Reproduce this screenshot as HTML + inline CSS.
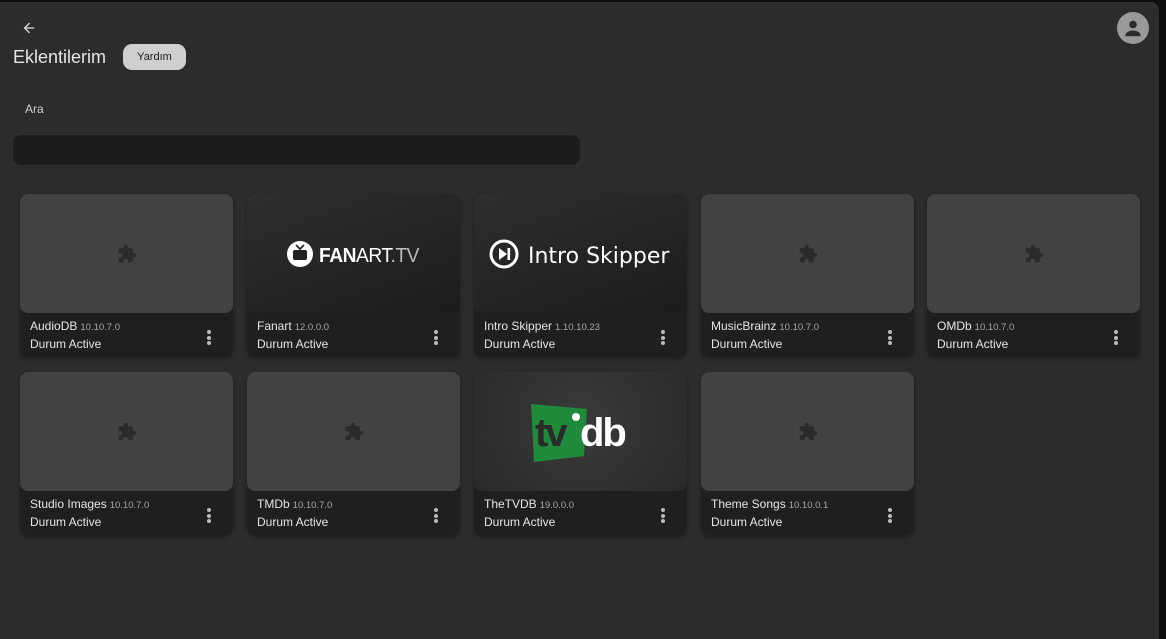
<!DOCTYPE html>
<html><head><meta charset="utf-8"><style>
*{box-sizing:border-box;margin:0;padding:0}
body{width:1166px;height:639px;background:#0e0e0e;font-family:"Liberation Sans",sans-serif;overflow:hidden;position:relative}
.panel{position:absolute;left:0;top:2px;width:1159px;height:637px;background:#2c2c2c;border-top-right-radius:8px}
.abs{position:absolute}
.title{left:13px;top:47px;color:#e6e6e6;font-size:18px}
.help{left:123px;top:44px;width:63px;height:26px;border-radius:9px;background:#cfcfcf;color:#1a1a1a;font-size:11px;text-align:center;line-height:26px}
.ara{left:25px;top:102px;color:#cfcfcf;font-size:12px}
.search{left:13px;top:135px;width:567px;height:30px;border-radius:8px;background:#1d1d1d}
.card{position:absolute;width:213px;height:163px;border-radius:8px;background:#1f1f1f;overflow:hidden;box-shadow:0 2px 4px rgba(0,0,0,.3)}
.img{height:119px;background:#424242;border-radius:8px;display:flex;align-items:center;justify-content:center}
.img.dark{background:linear-gradient(160deg,#2e2e2e,#1c1c1c)}
.img.tv{background:radial-gradient(circle at 50% 40%,#3a3a3a,#2a2a2a)}
.name{position:absolute;left:10px;top:125px;color:#e6e6e6;font-size:12px}
.name small{font-size:9.5px;color:#a8a8a8;margin-left:3px}
.st{position:absolute;left:10px;top:143px;color:#e6e6e6;font-size:12px}
.dots{position:absolute;right:22px;top:136px;width:4px}
.dots i{display:block;width:4px;height:4px;border-radius:2px;background:#bbb;margin-bottom:1.5px}
</style></head><body>
<div class="panel"></div>
<svg class="abs" style="left:21px;top:20px" width="16" height="16" viewBox="0 0 24 24"><path d="M20 11H7.8l5.6-5.6L12 4l-8 8 8 8 1.4-1.4L7.8 13H20z" fill="#ddd"/></svg>
<div class="abs title">Eklentilerim</div>
<div class="abs help">Yardım</div>
<svg class="abs" style="left:1117px;top:12px" width="32" height="32" viewBox="0 0 32 32"><circle cx="16" cy="16" r="16" fill="#9a9a9a"/><circle cx="16" cy="12.5" r="3.8" fill="#2c2c2c"/><path d="M8.5 23c0-3 5-4.5 7.5-4.5s7.5 1.5 7.5 4.5v1.2h-15z" fill="#2c2c2c"/></svg>
<div class="abs ara">Ara</div>
<div class="abs search"></div>

<div class="card" style="left:20px;top:194px"><div class="img"><svg width="20" height="20" viewBox="0 0 24 24"><path d="M20.5 11H19V7a2 2 0 0 0-2-2h-4V3.5a2.5 2.5 0 0 0-5 0V5H4a2 2 0 0 0-2 2v3.8h1.5a2.7 2.7 0 0 1 0 5.4H2V20a2 2 0 0 0 2 2h3.8v-1.5a2.7 2.7 0 0 1 5.4 0V22H17a2 2 0 0 0 2-2v-4h1.5a2.5 2.5 0 0 0 0-5z" fill="#2b2b2b"/></svg></div><div class="name">AudioDB<small>10.10.7.0</small></div><div class="st">Durum Active</div><div class="dots"><i></i><i></i><i></i></div></div>

<div class="card" style="left:247px;top:194px"><div class="img dark"><svg width="136" height="30" viewBox="0 0 136 30"><circle cx="14" cy="15" r="13" fill="#fff"/><rect x="7" y="11" width="14" height="10" rx="2" fill="#222"/><path d="M10 6l4 4 4-4" stroke="#222" stroke-width="1.8" fill="none"/><text x="33" y="23" font-family="Liberation Sans" font-size="20" letter-spacing="-0.5" textLength="100" lengthAdjust="spacingAndGlyphs" fill="#fff"><tspan font-weight="bold">FAN</tspan><tspan>ART</tspan><tspan fill="#bbb">.TV</tspan></text></svg></div><div class="name">Fanart<small>12.0.0.0</small></div><div class="st">Durum Active</div><div class="dots"><i></i><i></i><i></i></div></div>

<div class="card" style="left:474px;top:194px"><div class="img dark"><svg width="186" height="34" viewBox="0 0 186 34"><circle cx="16" cy="17" r="13" stroke="#fff" stroke-width="3" fill="none"/><path d="M11 11l8 6-8 6z" fill="#fff"/><rect x="19.5" y="11" width="2.6" height="12" fill="#fff"/><text x="40" y="26" font-family="DejaVu Sans" font-size="22" fill="#fff">Intro Skipper</text></svg></div><div class="name">Intro Skipper<small>1.10.10.23</small></div><div class="st">Durum Active</div><div class="dots"><i></i><i></i><i></i></div></div>

<div class="card" style="left:701px;top:194px"><div class="img"><svg width="20" height="20" viewBox="0 0 24 24"><path d="M20.5 11H19V7a2 2 0 0 0-2-2h-4V3.5a2.5 2.5 0 0 0-5 0V5H4a2 2 0 0 0-2 2v3.8h1.5a2.7 2.7 0 0 1 0 5.4H2V20a2 2 0 0 0 2 2h3.8v-1.5a2.7 2.7 0 0 1 5.4 0V22H17a2 2 0 0 0 2-2v-4h1.5a2.5 2.5 0 0 0 0-5z" fill="#2b2b2b"/></svg></div><div class="name">MusicBrainz<small>10.10.7.0</small></div><div class="st">Durum Active</div><div class="dots"><i></i><i></i><i></i></div></div>

<div class="card" style="left:927px;top:194px"><div class="img"><svg width="20" height="20" viewBox="0 0 24 24"><path d="M20.5 11H19V7a2 2 0 0 0-2-2h-4V3.5a2.5 2.5 0 0 0-5 0V5H4a2 2 0 0 0-2 2v3.8h1.5a2.7 2.7 0 0 1 0 5.4H2V20a2 2 0 0 0 2 2h3.8v-1.5a2.7 2.7 0 0 1 5.4 0V22H17a2 2 0 0 0 2-2v-4h1.5a2.5 2.5 0 0 0 0-5z" fill="#2b2b2b"/></svg></div><div class="name">OMDb<small>10.10.7.0</small></div><div class="st">Durum Active</div><div class="dots"><i></i><i></i><i></i></div></div>

<div class="card" style="left:20px;top:372px"><div class="img"><svg width="20" height="20" viewBox="0 0 24 24"><path d="M20.5 11H19V7a2 2 0 0 0-2-2h-4V3.5a2.5 2.5 0 0 0-5 0V5H4a2 2 0 0 0-2 2v3.8h1.5a2.7 2.7 0 0 1 0 5.4H2V20a2 2 0 0 0 2 2h3.8v-1.5a2.7 2.7 0 0 1 5.4 0V22H17a2 2 0 0 0 2-2v-4h1.5a2.5 2.5 0 0 0 0-5z" fill="#2b2b2b"/></svg></div><div class="name">Studio Images<small>10.10.7.0</small></div><div class="st">Durum Active</div><div class="dots"><i></i><i></i><i></i></div></div>

<div class="card" style="left:247px;top:372px"><div class="img"><svg width="20" height="20" viewBox="0 0 24 24"><path d="M20.5 11H19V7a2 2 0 0 0-2-2h-4V3.5a2.5 2.5 0 0 0-5 0V5H4a2 2 0 0 0-2 2v3.8h1.5a2.7 2.7 0 0 1 0 5.4H2V20a2 2 0 0 0 2 2h3.8v-1.5a2.7 2.7 0 0 1 5.4 0V22H17a2 2 0 0 0 2-2v-4h1.5a2.5 2.5 0 0 0 0-5z" fill="#2b2b2b"/></svg></div><div class="name">TMDb<small>10.10.7.0</small></div><div class="st">Durum Active</div><div class="dots"><i></i><i></i><i></i></div></div>

<div class="card" style="left:474px;top:372px"><div class="img tv"><svg width="104" height="60" viewBox="0 0 104 60"><path d="M2 2l56 5-3 47-50 6z" fill="#1f8a3a"/><text x="6" y="44" font-family="Liberation Sans" font-weight="bold" font-size="40" letter-spacing="-3" fill="#2a2a2a">tv</text><circle cx="47" cy="15" r="4" fill="#fff"/><text x="51" y="44" font-family="Liberation Sans" font-weight="bold" font-size="40" letter-spacing="-2" fill="#fff">db</text></svg></div><div class="name">TheTVDB<small>19.0.0.0</small></div><div class="st">Durum Active</div><div class="dots"><i></i><i></i><i></i></div></div>

<div class="card" style="left:701px;top:372px"><div class="img"><svg width="20" height="20" viewBox="0 0 24 24"><path d="M20.5 11H19V7a2 2 0 0 0-2-2h-4V3.5a2.5 2.5 0 0 0-5 0V5H4a2 2 0 0 0-2 2v3.8h1.5a2.7 2.7 0 0 1 0 5.4H2V20a2 2 0 0 0 2 2h3.8v-1.5a2.7 2.7 0 0 1 5.4 0V22H17a2 2 0 0 0 2-2v-4h1.5a2.5 2.5 0 0 0 0-5z" fill="#2b2b2b"/></svg></div><div class="name">Theme Songs<small>10.10.0.1</small></div><div class="st">Durum Active</div><div class="dots"><i></i><i></i><i></i></div></div>
</body></html>
